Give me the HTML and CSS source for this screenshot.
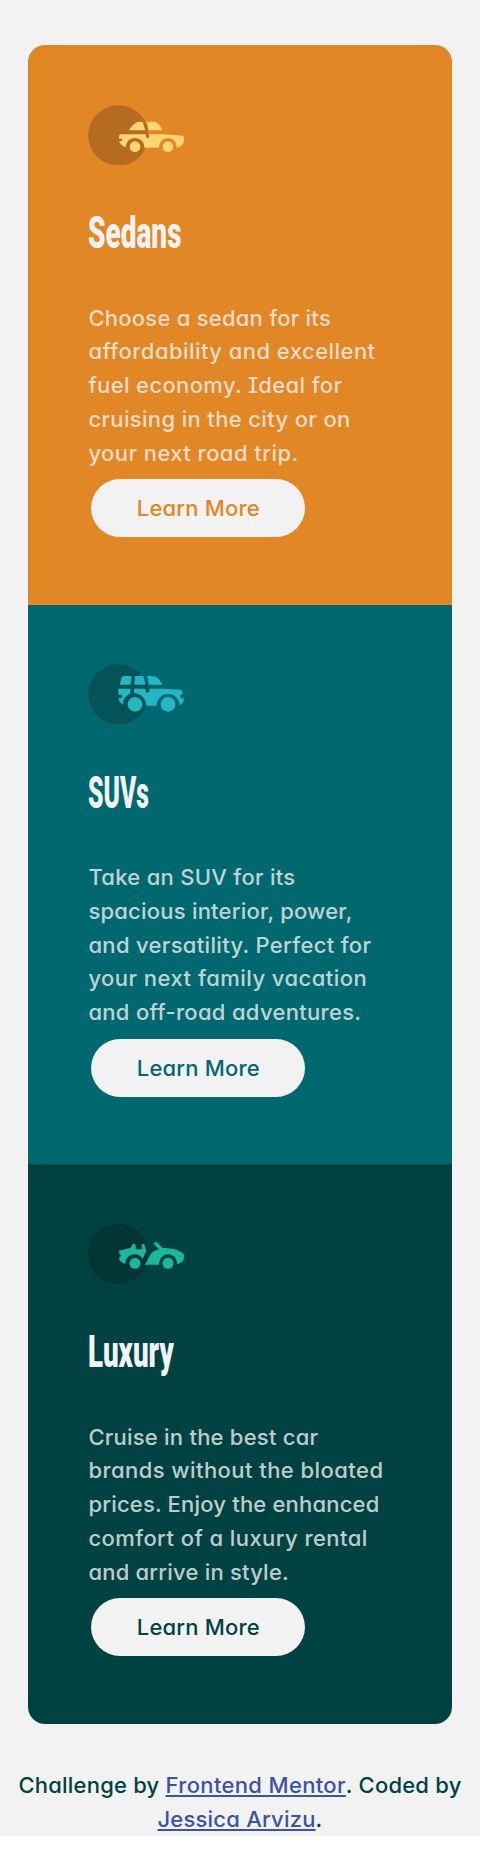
FILE: index.html
```
<!DOCTYPE html>
<html lang="en">
<head>
<meta charset="utf-8">
<title>3-column preview card</title>
<link rel="stylesheet" href="styles.css">
</head>
<body>
<div class="page">
  <main class="cards">
    <section class="card sedans">
      <svg class="icon" viewBox="24 29 290 181" aria-hidden="true">
        <circle class="disc" cx="115" cy="120" r="90.5"/>
        <g class="car">
          <path d="M146 105C156 91 164 80 180 79H187C191 87 194 96 195 105Z"/>
          <path d="M199 79H218C235 80 241 91 247 105H206C205 95 203 87 199 79Z"/>
          <path d="M121 117H197L199 127Q204 131 208 126L207 117H252L308 121Q313 123 312 129V137Q310 152 290 157C290 138 278 128 264 128C249 128 237 140 237 157H193C193 138 180 128 165 128C149 128 138 139 138 156Q121 150 118 140V138H125Q129 134 125 130H117V123Q118 118 121 117Z"/>
          <circle cx="165" cy="154" r="16"/><circle cx="264" cy="154" r="16"/>
        </g>
      </svg>
      <h2><span>Sedans</span></h2>
      <p><span class="l1">Choose a sedan for its</span> <span class="l2">affordability and excellent</span> <span class="l3">fuel economy. Ideal for</span> <span class="l4">cruising in the city or on</span> <span class="l5">your next road trip.</span></p>
      <a class="button"><span>Learn More</span></a>
    </section>
    <section class="card suvs">
      <svg class="icon" viewBox="24 29 290 181" aria-hidden="true">
        <circle class="disc" cx="115" cy="120" r="90.5"/>
        <g class="car">
          <path d="M119 91L125 69Q127 65 132 65H155L152 91Z"/>
          <path d="M165 65H189C193 73 195 82 196 91H163Z"/>
          <path d="M201 65H216C234 66 241 77 247 91H206C206 82 204 73 201 65Z"/>
          <path d="M115 103H151V118Q139 122 131 136L128 151Q120 145 116 138V131H125Q129 126 125 121H115Z"/>
          <path d="M162 103H196L198 112Q202 118 208 112L209 103H254L302 106Q308 108 308 120H304Q297 126 304 132H312Q312 147 299 153C297 131 282 119 264 119C246 119 231 133 230 154H199C198 132 182 118 162 116Z"/>
          <circle cx="165" cy="150" r="22"/><circle cx="264" cy="150" r="22"/>
        </g>
      </svg>
      <h2><span>SUVs</span></h2>
      <p><span class="l1">Take an SUV for its</span> <span class="l2">spacious interior, power,</span> <span class="l3">and versatility. Perfect for</span> <span class="l4">your next family vacation</span> <span class="l5">and off-road adventures.</span></p>
      <a class="button"><span>Learn More</span></a>
    </section>
    <section class="card luxury">
      <svg class="icon" viewBox="24 27 290 181" aria-hidden="true">
        <circle class="disc" cx="115" cy="117" r="90.5"/>
        <g class="car">
          <path d="M117 107Q137 103 153 98L157 89Q161 84 167 89V101Q176 104 187 101L184 91Q186 86 192 87Q196 90 196 98L199 108Q194 120 188 131C183 123 175 118 164 118C148 118 137 130 136 147Q120 142 118 133V127L124 122Q119 119 118 115Z"/>
          <path d="M222 84Q227 78 232 83L248 99C275 99 300 105 311 117Q314 123 311 134Q306 144 291 147C291 129 279 118 264 118C249 118 237 131 237 149H194Q204 135 211 119Q217 109 238 103L223 89Z"/>
          <circle cx="165" cy="145" r="16.500"/><circle cx="264" cy="145" r="16.500"/>
        </g>
      </svg>
      <h2><span>Luxury</span></h2>
      <p><span class="l1">Cruise in the best car</span> <span class="l2">brands without the bloated</span> <span class="l3">prices. Enjoy the enhanced</span> <span class="l4">comfort of a luxury rental</span> <span class="l5">and arrive in style.</span></p>
      <a class="button"><span>Learn More</span></a>
    </section>
  </main>
  <footer>Challenge by <a class="mentor" href="#">Frontend Mentor</a>. Coded by<br><a class="author" href="#">Jessica Arvizu</a>.</footer>
</div>
</body>
</html>
```
FILE: styles.css
```
* { box-sizing: border-box; }
body {
  margin: 0;
  background: #fff;
  font: 500 22px/33.75px Inter, "Noto Sans", sans-serif;
  font-feature-settings: "cv11", "cv08";
}
.page {
  height: 1835.7px;
  padding-top: 45px;
  background: #f2f2f2;
}
.cards {
  width: 424px;
  margin-left: 28.4px;
  border-radius: 17px;
  overflow: hidden;
}
.card {
  height: 559.5px;
  padding: 59.5px 60px 0;
  background: var(--tone);
}
.sedans { --tone: #e18726; --car: #ffd473; --disc: #b56c20; }
.suvs { --tone: #00686e; --car: #25b5c3; --disc: #045358; }
.luxury { --tone: #004241; --car: #1bb79c; --disc: #033534; }
.icon {
  display: block;
  width: 96.67px;
  height: 60.33px;
}
.disc { fill: var(--disc); }
.car { fill: var(--car); }
h2 {
  margin: 46.2px 0 46.7px;
  font: 900 44px/44px Roboto, sans-serif;
  color: #f2f2f2;
}
h2 span {
  display: inline-block;
  transform-origin: 0 0;
}
.sedans h2 span { transform: scaleX(.636); }
.suvs h2 span { transform: scaleX(.562); }
.luxury h2 span { transform: scaleX(.632); }
p {
  margin: 0;
  color: rgba(242, 242, 242, .8);
}
p span {
  display: block;
  white-space: nowrap;
}
.sedans .l1 { letter-spacing: .245px; }
.sedans .l2 { letter-spacing: .45px; }
.sedans .l3 { letter-spacing: .361px; }
.sedans .l4 { letter-spacing: .35px; }
.sedans .l5 { letter-spacing: .44px; }
.suvs .l1 { letter-spacing: .29px; }
.suvs .l2 { letter-spacing: .22px; }
.suvs .l3 { letter-spacing: .331px; }
.suvs .l4 { letter-spacing: .47px; }
.suvs .l5 { letter-spacing: .313px; }
.luxury .l1 { letter-spacing: .232px; }
.luxury .l2 { letter-spacing: .44px; }
.luxury .l3 { letter-spacing: .189px; }
.luxury .l4 { letter-spacing: .433px; }
.luxury .l5 { letter-spacing: .208px; }
.button {
  display: flex;
  align-items: center;
  justify-content: center;
  width: 214px;
  height: 58px;
  margin: 8.6px 0 0 3px;
  padding-top: 2px;
  border-radius: 29px;
  background: #f2f2f2;
  color: var(--tone);
  letter-spacing: .2px;
}
footer {
  padding: 45.3px 0 0;
  text-align: center;
  color: #004241;
  letter-spacing: .21px;
}
footer a {
  color: #3e52a3;
  text-underline-offset: 2px;
  text-decoration-thickness: 2px;
  text-decoration-skip-ink: none;
}
.mentor { letter-spacing: .339px; }
```
